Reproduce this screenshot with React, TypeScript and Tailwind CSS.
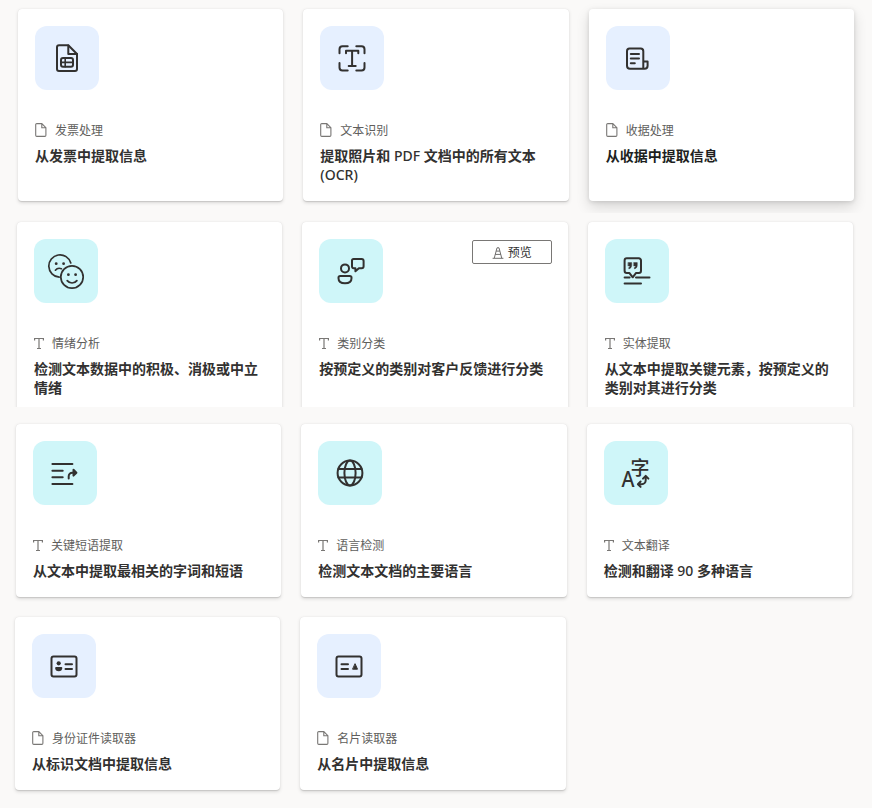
import type { ReactNode } from 'react';

type Kind = 'document' | 'text';

interface Model {
  kind: Kind;
  label: string;
  title: ReactNode;
  icon: ReactNode;
  preview?: boolean;
  raised?: boolean;
}

const invoiceIcon = (
  <>
    <path d="M24 19.3h9.3L42 28v15a2 2 0 0 1-2 2H24a2 2 0 0 1-2-2V21.3a2 2 0 0 1 2-2z" />
    <path d="M33.3 19.5V28H42" />
    <rect x="26" y="32" width="12" height="8.8" rx="2" />
    <path d="M30.2 32v8.8M26 36.4h12" strokeWidth="1.6" />
  </>
);

const scanTextIcon = (
  <>
    <path d="M19.5 27.3v-4.1a3 3 0 0 1 3-3h5.2M36.3 20.2h5.2a3 3 0 0 1 3 3v4.1M44.5 37v4.4a3 3 0 0 1-3 3h-5.2M27.7 44.4h-5.2a3 3 0 0 1-3-3V37" />
    <path d="M26 27.2v-2.4h12.3v2.4M32.1 24.8v15M28.7 39.9h7" />
  </>
);

const receiptIcon = (
  <>
    <path d="M23.5 22.6h11.2a2.6 2.6 0 0 1 2.6 2.6v17.6H24a3 3 0 0 1-3-3V25.2a2.6 2.6 0 0 1 2.5-2.6zM37.3 35.4h4.3v4.4a3 3 0 0 1-3 3h-2" />
    <path d="M24.8 28.1h8.2M24.8 32.5h8.2M24.8 37.2h4" />
  </>
);

const sentimentIcon = (
  <>
    <path d="M36.8 24A11.2 11.2 0 1 0 25.2 38.2" strokeWidth="1.7" />
    <circle cx="38" cy="38" r="11.2" strokeWidth="1.7" />
    <path d="M21.4 31.2c1.5-1.9 3.8-2.3 6-1.5M33.2 41.6c2.6 3.2 7.1 3.2 9.7 0" strokeWidth="1.7" />
    <g fill="currentColor" stroke="none">
      <circle cx="22.2" cy="24.7" r="1.4" />
      <circle cx="29.6" cy="24.7" r="1.4" />
      <circle cx="34.4" cy="35.7" r="1.4" />
      <circle cx="41.6" cy="35.7" r="1.4" />
    </g>
  </>
);

const classifyIcon = (
  <>
    <circle cx="26" cy="29.4" r="4" />
    <path d="M21.2 36.9h9.6a1.7 1.7 0 0 1 1.7 1.7v.6c0 3.2-2.8 5-6.5 5s-6.5-1.8-6.5-5v-.6a1.7 1.7 0 0 1 1.7-1.7zM34.6 20h8a2 2 0 0 1 2 2v5.2a2 2 0 0 1-2 2h-2.7l-3.5 3.1v-3.1h-1.8a1.6 1.6 0 0 1-1.6-1.6V21.6a1.6 1.6 0 0 1 1.6-1.6z" />
  </>
);

const entityIcon = (
  <>
    <path d="M21.8 19.3h12a2.2 2.2 0 0 1 2.2 2.2v10.2a2.2 2.2 0 0 1-2.2 2.2h-2.7l-3.4 4.4-3.4-4.4h-2.5a2.2 2.2 0 0 1-2.2-2.2V21.5a2.2 2.2 0 0 1 2.2-2.2zM19.6 38.6h5M31 38.6h13.5M19.6 44.4H36" />
    <path
      d="M23.2 23.6h3.5v2.6c0 2-1 3.2-2.9 3.7v-1.5c.7-.3 1.1-.8 1.2-1.5h-1.8zM28.8 23.6h3.5v2.6c0 2-1 3.2-2.9 3.7v-1.5c.7-.3 1.1-.8 1.2-1.5h-1.8z"
      fill="currentColor"
      strokeWidth="0.4"
    />
  </>
);

const keyPhraseIcon = (
  <>
    <path d="M19.4 23h20M19.4 29.7h10.3M19.4 36.3h10.3M19.4 43h20" />
    <path d="M35.7 37.6v-2.3a3.6 3.6 0 0 1 3.6-3.6h3.5M40.5 28.8l2.9 2.9-2.9 2.9z" />
  </>
);

const globeIcon = (
  <>
    <circle cx="32" cy="32" r="12.4" />
    <ellipse cx="32" cy="32" rx="5.6" ry="12.4" />
    <path d="M20.4 27.9h23.2M20.4 36.6h23.2" />
  </>
);

const translateIcon = (
  <>
    <g fill="currentColor" stroke="none">
      <text x="17.5" y="45.8" fontSize="22" fontWeight="500" textLength="13" lengthAdjust="spacingAndGlyphs" className="font-['Noto_Sans',sans-serif]">A</text>
      <text x="26.5" y="34.3" fontSize="19" fontWeight="500" className="font-['Noto_Sans_CJK_SC',sans-serif]">字</text>
    </g>
    <path d="M41.7 36v3.2a4 4 0 0 1-4 4h-3M39 37.6l2.7-2.7 2.7 2.7M36.6 40.5l-2.7 2.7 2.7 2.7" />
  </>
);

const idCardIcon = (
  <>
    <rect x="19.5" y="22.5" width="25" height="20" rx="2" />
    <g fill="currentColor" stroke="none">
      <circle cx="26.7" cy="29.3" r="2.1" />
      <path d="M24.1 33h5.2a1 1 0 0 1 1 1c0 2-1.5 3.3-3.6 3.3S23.1 36 23.1 34a1 1 0 0 1 1-1z" />
    </g>
    <path d="M33.5 30.2H40M33.5 34.9H40" />
  </>
);

const businessCardIcon = (
  <>
    <rect x="19.5" y="22.5" width="25" height="20" rx="2" />
    <path d="M24.5 30.2H31M24.5 34.9H31" />
    <path d="M38.2 30l2.3 5.2h-4.6z" fill="currentColor" strokeWidth="1" />
  </>
);

const rows: { frame: string; height: string; models: Model[] }[] = [
  {
    frame: 'h-[213px] pt-[9px] pl-[18px]',
    height: 'h-[192px]',
    models: [
      { kind: 'document', label: '发票处理', title: '从发票中提取信息', icon: invoiceIcon },
      {
        kind: 'document',
        label: '文本识别',
        title: (
          <>
            提取照片和 <span className="font-medium">PDF</span> 文档中的所有文本 <span className="font-medium">(OCR)</span>
          </>
        ),
        icon: scanTextIcon,
      },
      { kind: 'document', label: '收据处理', title: '从收据中提取信息', icon: receiptIcon, raised: true },
    ],
  },
  {
    frame: 'h-[194px] pt-[9px] pl-[17px]',
    height: 'h-[192px]',
    models: [
      { kind: 'text', label: '情绪分析', title: '检测文本数据中的积极、消极或中立情绪', icon: sentimentIcon },
      { kind: 'text', label: '类别分类', title: '按预定义的类别对客户反馈进行分类', icon: classifyIcon, preview: true },
      { kind: 'text', label: '实体提取', title: '从文本中提取关键元素，按预定义的类别对其进行分类', icon: entityIcon },
    ],
  },
  {
    frame: 'h-[201px] pt-[17px] pl-[16px]',
    height: 'h-[173px]',
    models: [
      { kind: 'text', label: '关键短语提取', title: '从文本中提取最相关的字词和短语', icon: keyPhraseIcon },
      { kind: 'text', label: '语言检测', title: '检测文本文档的主要语言', icon: globeIcon },
      {
        kind: 'text',
        label: '文本翻译',
        title: (
          <>
            检测和翻译 <span className="font-medium">90</span> 多种语言
          </>
        ),
        icon: translateIcon,
      },
    ],
  },
  {
    frame: 'h-[200px] pt-[9px] pl-[15px]',
    height: 'h-[173px]',
    models: [
      { kind: 'document', label: '身份证件读取器', title: '从标识文档中提取信息', icon: idCardIcon },
      { kind: 'document', label: '名片读取器', title: '从名片中提取信息', icon: businessCardIcon },
    ],
  },
];

function KindIcon({ kind }: { kind: Kind }) {
  if (kind === 'document') {
    return (
      <svg className="mr-[8px] mb-[2px] h-[14px] w-[12px] shrink-0" viewBox="0 0 12 14" fill="none" stroke="#797775" strokeWidth="1.1">
        <path d="M1.8.6h5l4.1 4.1v7.6a1.1 1.1 0 0 1-1.1 1.1h-8a1.1 1.1 0 0 1-1.1-1.1V1.7A1.1 1.1 0 0 1 1.8.6zM6.8.8v3.9h3.9" />
      </svg>
    );
  }
  return (
    <svg className="mr-[8px] mb-[2px] h-[14px] w-[10px] shrink-0" viewBox="0 0 10 14" fill="none" stroke="#797775">
      <path d="M.6 4.5v-2h8.8v2M5 2.5v10M3 12.5h4" strokeWidth="1.2" />
    </svg>
  );
}

function PreviewBadge() {
  return (
    <div className="mt-px -mr-px flex h-6 w-20 items-center justify-center gap-1 rounded-[2px] border border-[#797775] pt-px text-[12px] leading-none text-[#323130]">
      <svg className="h-[12px] w-[12px]" viewBox="0 0 12 12" fill="none" stroke="#605e5c" strokeWidth="0.9">
        <path d="M.6 11.3h10.8M2.3 11L5 .8h2L9.7 11M4.2 4.1h3.6M3.3 7.4h5.4" />
      </svg>
      <span>预览</span>
    </div>
  );
}

function ModelCard({ model, height }: { model: Model; height: string }) {
  const shadow = model.raised
    ? 'shadow-[0_6px_14px_rgba(0,0,0,0.14),0_1px_4px_rgba(0,0,0,0.12)]'
    : 'shadow-[0_1.6px_3.6px_rgba(0,0,0,0.13),0_0.3px_0.9px_rgba(0,0,0,0.11)]';
  const tile = model.kind === 'document' ? 'bg-[#e6f0ff]' : 'bg-[#cff6f9]';
  return (
    <article className={`${height} ${shadow} rounded-[4px] bg-white px-[17px] pt-[17px]`}>
      <div className="flex items-start justify-between">
        <div className={`size-16 rounded-[12px] ${tile}`}>
          <svg
            className="size-16 text-[#323130]"
            viewBox="0 0 64 64"
            fill="none"
            stroke="currentColor"
            strokeWidth="2"
            strokeLinecap="round"
            strokeLinejoin="round"
          >
            {model.icon}
          </svg>
        </div>
        {model.preview && <PreviewBadge />}
      </div>
      <div className="mt-[33px] flex h-4 items-center text-[12px] leading-4 text-[#605e5c]">
        <KindIcon kind={model.kind} />
        <span>{model.label}</span>
      </div>
      <h3 className={`mt-[7px] text-[14px] leading-[19px] font-semibold ${model.raised ? 'text-[#201f1e]' : 'text-[#323130]'}`}>
        {model.title}
      </h3>
    </article>
  );
}

export default function App() {
  return (
    <main className="flex h-[808px] w-[872px] flex-col bg-[#faf9f8] font-['Noto_Sans','Noto_Sans_CJK_SC',sans-serif]">
      {rows.map((row) => (
        <section key={row.frame} className={`${row.frame} grid shrink-0 grid-cols-[265.33px_265.33px_265.33px] items-start gap-x-5 overflow-hidden`}>
          {row.models.map((model) => (
            <ModelCard key={model.label} model={model} height={row.height} />
          ))}
        </section>
      ))}
    </main>
  );
}
